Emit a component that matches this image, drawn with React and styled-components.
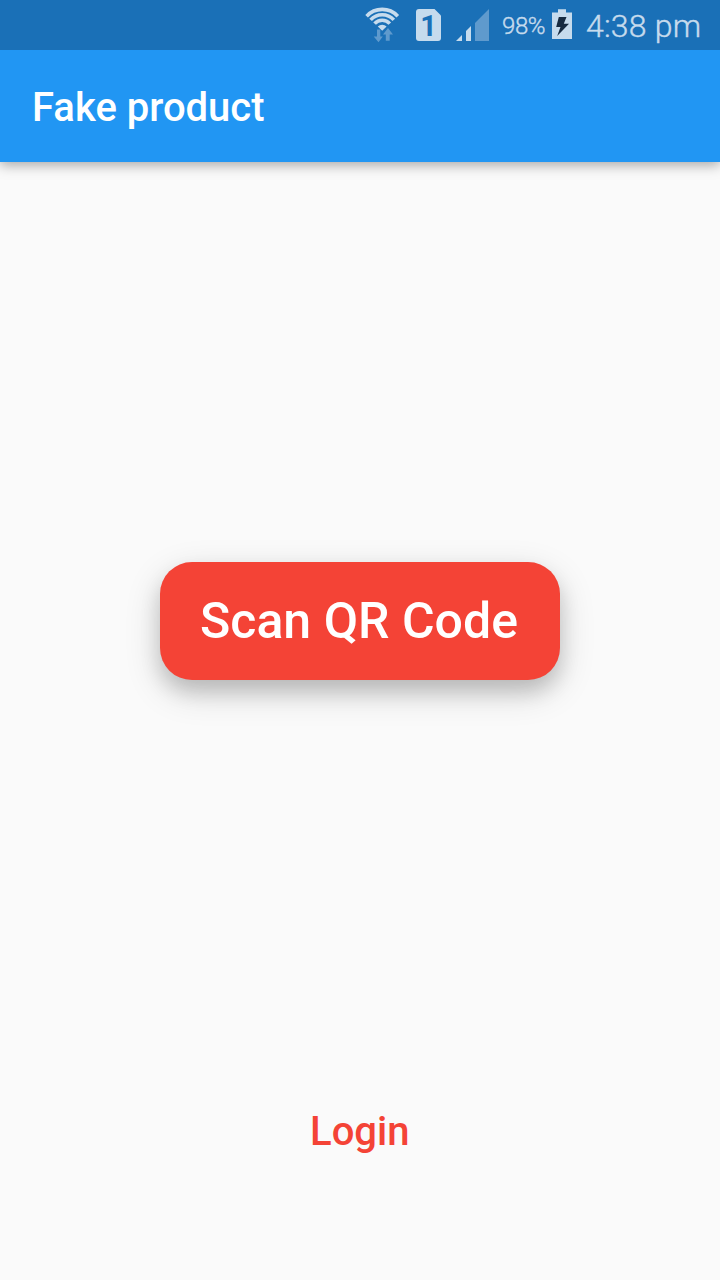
import React from "react";
import styled, { createGlobalStyle } from "styled-components";

const GlobalStyle = createGlobalStyle`
  * { box-sizing: border-box; }
  body { margin: 0; font-family: Roboto, sans-serif; background: #fafafa; }
`;

const Screen = styled.div`
  display: flex;
  flex-direction: column;
  width: 720px;
  height: 1280px;
  background: #fafafa;
  overflow: hidden;
`;

const Header = styled.header`
  flex: none;
  background: #2196f3;
  box-shadow: 0 3px 12px rgba(0, 0, 0, 0.34);
`;

const StatusBar = styled.div`
  display: flex;
  justify-content: flex-end;
  align-items: center;
  height: 50px;
  padding-right: 19px;
  background: #1a70b7;
  color: #c6dbed;
`;

const StatusIcons = styled.svg`
  flex: none;
  width: 140px;
  height: 50px;
`;

const BatteryIcon = styled.svg`
  flex: none;
  width: 20px;
  height: 50px;
  margin: 0 14px 0 6px;
`;

const StatusText = styled.span`
  flex: none;
  width: ${(p) => p.$width}px;
  font-size: ${(p) => p.$size}px;
  font-weight: 300;
  line-height: 50px;
  padding-top: 2px;
  white-space: nowrap;
  letter-spacing: ${(p) => p.$spacing}px;
  -webkit-text-stroke: 0.4px currentColor;
`;

const AppBar = styled.div`
  display: flex;
  align-items: center;
  height: 112px;
  padding: 4px 32px 0;
`;

const Title = styled.h1`
  margin: 0;
  color: #fff;
  font-size: 40px;
  font-weight: 500;
  line-height: 48px;
`;

const Body = styled.main`
  display: flex;
  flex: 1;
  flex-direction: column;
  align-items: center;
  padding-top: 400px;
`;

const ScanButton = styled.button`
  width: 400px;
  height: 118px;
  padding: 0 2px 1px 0;
  border: 0;
  border-radius: 32px;
  background: #f44336;
  box-shadow: 0 12px 36px rgba(0, 0, 0, 0.16), 0 12px 20px rgba(0, 0, 0, 0.15);
  color: #fff;
  font: 500 50px/60px Roboto, sans-serif;
`;

const LoginButton = styled.button`
  width: 176px;
  height: 72px;
  margin-top: 416px;
  padding: 0 0.5px 0 0;
  border: 0;
  background: none;
  color: #f44336;
  font: 500 40px/48px Roboto, sans-serif;
`;

const Digit = styled.text`
  font: 700 29px Roboto, sans-serif;
  fill: #1a70b7;
`;

function Connectivity() {
  return (
    <StatusIcons viewBox="362 0 140 50" aria-hidden="true">
      <g fill="none" stroke="#c6dbed" strokeWidth="3.6">
        <path d="M366.6 16.2A21.3 21.3 0 0 1 397.8 16.2" />
        <path d="M370.6 19.9A15.7 15.7 0 0 1 393.8 19.9" />
        <path d="M374.6 23.6A10.2 10.2 0 0 1 389.8 23.6" />
      </g>
      <path fill="#c6dbed" d="M377.8 26.6A6 6 0 0 1 386.6 26.6L382.2 30.8Z" />
      <g fill="#5f9acd">
        <path d="M377 29.5H380.3V36.5H382.8L378.5 42.3L373.7 36.5H377Z" />
        <path d="M388 28L393 34.5H389.7V40.8H385.8V34.5H383Z" />
      </g>
      <path
        fill="#c6dbed"
        d="M419 9H434.5L441 15.5V38Q441 41 438 41H419Q416 41 416 38V12Q416 9 419 9Z"
      />
      <Digit x="420.2" y="35.7">1</Digit>
      <g fill="#c6dbed">
        <path d="M456 41L462 35V41Z" />
        <path d="M466 41V31L471 26V41Z" />
      </g>
      <path fill="#5f9acd" d="M475 41V23L489 9V41Z" />
    </StatusIcons>
  );
}

function Battery() {
  return (
    <BatteryIcon viewBox="552 0 20 50" aria-hidden="true">
      <path fill="#c6dbed" d="M552 39V12.5H558V9.3H566V12.5H572V39Z" />
      <path fill="#172b41" d="M558.8 17H566.5L563.8 23.7H569L557.2 36L560.5 27H556.2Z" />
    </BatteryIcon>
  );
}

export default function App() {
  return (
    <>
      <GlobalStyle />
      <Screen>
        <Header>
          <StatusBar>
            <Connectivity />
            <StatusText $size={24} $width={44} $spacing={-0.4}>98%</StatusText>
            <Battery />
            <StatusText $size={32} $width={115} $spacing={0.2}>4:38 pm</StatusText>
          </StatusBar>
          <AppBar>
            <Title>Fake product</Title>
          </AppBar>
        </Header>
        <Body>
          <ScanButton>Scan QR Code</ScanButton>
          <LoginButton>Login</LoginButton>
        </Body>
      </Screen>
    </>
  );
}
